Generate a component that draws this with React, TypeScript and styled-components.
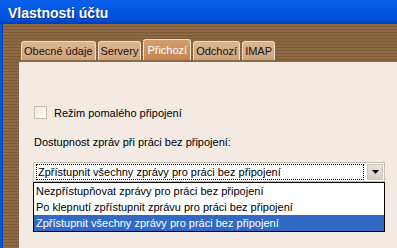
import React from 'react'
import styled, { createGlobalStyle } from 'styled-components'

const GlobalStyle = createGlobalStyle`
    html, body {
        margin: 0;
        padding: 0;
        background: #F2EAE3;
    }
    body {
        font-family: "Liberation Sans", Arial, sans-serif;
        font-size: 11px;
        color: #000;
    }
`

const Window = styled.div`
    width: 397px;
    height: 248px;
    overflow: hidden;
    display: flex;
    flex-direction: column;
`

const TitleBar = styled.div`
    height: 24px;
    flex-shrink: 0;
    display: flex;
    align-items: center;
    padding-left: 8px;
    background: linear-gradient(to bottom, #0A5FE8 0%, #0058E6 40%, #0050DC 80%, #0046C8 92%, #003CA8 100%);
`

const Title = styled.span`
    font-family: "Liberation Sans", Arial, sans-serif;
    font-weight: bold;
    font-size: 14px;
    color: #FFFFFF;
    text-shadow: 1px 1px 0 #0A2E8C;
    margin-top: 2px;
`

const Body = styled.div`
    flex: 1;
    display: flex;
`

const LeftBorder = styled.div`
    width: 3px;
    flex-shrink: 0;
    background: linear-gradient(to right, #0A5CE0, #0044C0);
`

const Wood = styled.div`
    flex: 1;
    display: flex;
    flex-direction: column;
    padding: 15px 0 0 16px;
    background: repeating-linear-gradient(
        to bottom,
        #8F6944 0px,
        #8F6944 2px,
        #7C5937 2px,
        #7C5937 3px
    );
`

const TabRow = styled.div`
    display: flex;
    align-items: flex-end;
    gap: 2px;
    padding-left: 2px;
    height: 23px;
`

const Tab = styled.div<{ $active?: boolean }>`
    height: ${p => (p.$active ? '21px' : '19px')};
    padding: 0 ${p => (p.$active ? '3px' : '2px')};
    display: flex;
    align-items: center;
    border: 1px solid ${p => (p.$active ? '#F4E4D4' : '#EDDCCB')};
    border-bottom: none;
    border-radius: 3px 3px 0 0;
    background: ${p => (p.$active
        ? 'linear-gradient(to bottom, #D39D6C, #C28654)'
        : 'linear-gradient(to bottom, #D9B692, #CDA37B)')};
    color: ${p => (p.$active ? '#FFFFFF' : '#1A1410')};
    font-size: 11px;
    box-sizing: border-box;
    margin-bottom: 2px;
`

const Panel = styled.div`
    flex: 1;
    background: #F2EAE3;
    padding: 44px 0 0 14px;
    display: flex;
    flex-direction: column;
`

const CheckRow = styled.label`
    display: flex;
    align-items: center;
    gap: 7px;
    margin-left: 1px;
`

const CheckBox = styled.span`
    width: 13px;
    height: 13px;
    box-sizing: border-box;
    border: 1px solid #C9BCAE;
    background: linear-gradient(135deg, #ECE7E0, #FFFFFF);
`

const Caption = styled.div`
    margin-top: 17px;
    margin-left: 1px;
`

const Combo = styled.div`
    margin-top: 14px;
    width: 352px;
    height: 20px;
    box-sizing: border-box;
    border: 1px solid #C7BFB4;
    background: #FFFFFF;
    display: flex;
    align-items: center;
    padding: 1px;
`

const ComboText = styled.div`
    flex: 1;
    height: 16px;
    margin: 0 3px 0 1px;
    border: 1px dotted #000;
    box-sizing: border-box;
    display: flex;
    align-items: center;
    padding-left: 1px;
`

const ArrowButton = styled.div`
    width: 16px;
    height: 16px;
    box-sizing: border-box;
    background: linear-gradient(to bottom, #E9E2DA, #D8CFC5);
    border: 1px solid #CFC6BB;
    display: flex;
    align-items: center;
    justify-content: center;
`

const List = styled.div`
    width: 352px;
    box-sizing: border-box;
    border: 1px solid #000;
    background: #FFFFFF;
    display: flex;
    flex-direction: column;
`

const Item = styled.div<{ $selected?: boolean }>`
    height: 16px;
    display: flex;
    align-items: center;
    padding-left: 2px;
    background: ${p => (p.$selected ? '#316AC5' : 'transparent')};
    color: ${p => (p.$selected ? '#FFFFFF' : '#000')};
`

const options = [
    'Nezpřístupňovat zprávy pro práci bez připojení',
    'Po klepnutí zpřístupnit zprávu pro práci bez připojení',
    'Zpřístupnit všechny zprávy pro práci bez připojení',
]

const App: React.FC = () => {
    const tabs = ['Obecné údaje', 'Servery', 'Přichozí', 'Odchozí', 'IMAP']

    return (
        <Window>
            <GlobalStyle />
            <TitleBar>
                <Title>Vlastnosti účtu</Title>
            </TitleBar>
            <Body>
                <LeftBorder />
                <Wood>
                    <TabRow>
                        {tabs.map(t => (
                            <Tab key={t} $active={t === 'Přichozí'}>{t}</Tab>
                        ))}
                    </TabRow>
                    <Panel>
                        <CheckRow>
                            <CheckBox />
                            <span>Režim pomalého připojení</span>
                        </CheckRow>
                        <Caption>Dostupnost zpráv při práci bez připojení:</Caption>
                        <Combo>
                            <ComboText>{options[2]}</ComboText>
                            <ArrowButton>
                                <svg width="7" height="4" viewBox="0 0 7 4">
                                    <path d="M0 0h7L3.5 4z" fill="#000" />
                                </svg>
                            </ArrowButton>
                        </Combo>
                        <List>
                            {options.map((o, i) => (
                                <Item key={o} $selected={i === 2}>{o}</Item>
                            ))}
                        </List>
                    </Panel>
                </Wood>
            </Body>
        </Window>
    )
}

export default App
